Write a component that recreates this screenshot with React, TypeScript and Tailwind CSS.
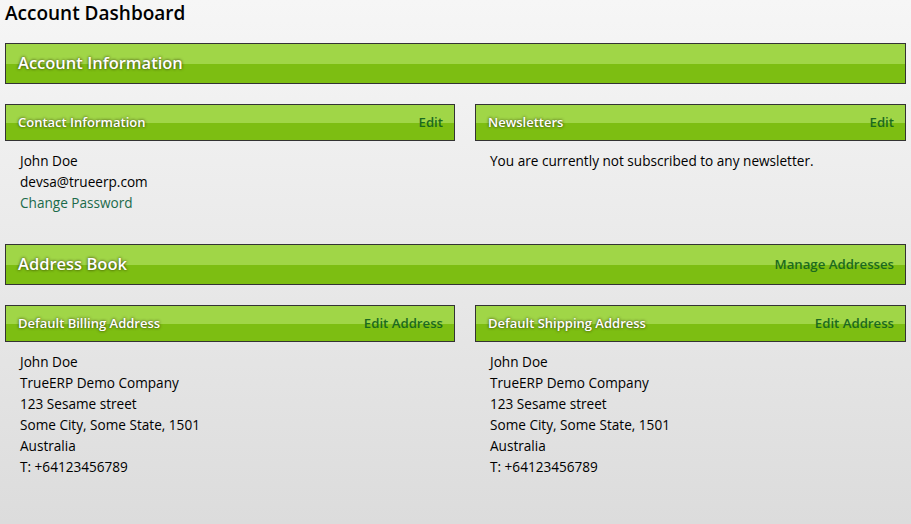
import React from 'react';

type BarProps = {
  title: string;
  action?: string;
  big?: boolean;
};

// green two-tone header bar
const Bar = ({ title, action, big = false }: BarProps) => (
  <div
    className={`flex items-center justify-between border border-[#333] bg-[linear-gradient(to_bottom,#a0d647_0%,#a0d647_52%,#7dbe12_52%,#7dbe12_100%)] pl-3 pr-[11px] leading-none ${
      big ? 'h-[41px]' : 'h-[37px]'
    }`}
  >
    <span
      className={`text-white [text-shadow:0_0_3px_rgba(40,40,0,1)] ${
        big ? 'text-[16.5px] font-semibold' : 'text-[13px] font-semibold'
      }`}
    >
      {title}
    </span>
    {action && (
      <a href="#" className={`text-[13.2px] font-semibold text-[#1b6a1f] ${big ? '' : 'pt-[1px]'}`}>
        {action}
      </a>
    )}
  </div>
);

const Lines = ({ lines }: { lines: string[] }) => (
  <div className="px-[15px] pt-[9px] text-[13.6px] leading-[21px] text-black">
    {lines.map((l) => (
      <div key={l}>{l}</div>
    ))}
  </div>
);

const address = [
  'John Doe',
  'TrueERP Demo Company',
  '123 Sesame street',
  'Some City, Some State, 1501',
  'Australia',
  'T: +64123456789',
];

export default function App() {
  return (
    <div className="min-h-[524px] bg-[linear-gradient(to_bottom,#f6f6f6,#dcdcdc)] px-[5px] pb-6 font-['Open_Sans','Noto_Sans',sans-serif]">
      <h1 className="text-[19px] font-semibold leading-[26px] text-black">Account Dashboard</h1>

      <div className="mt-[17px]">
        <Bar title="Account Information" big />
      </div>

      <div className="mt-5 grid grid-cols-[450px_1fr] gap-5">
        <div>
          <Bar title="Contact Information" action="Edit" />
          <div className="px-[15px] pt-[9px] text-[13.6px] leading-[21px] text-black">
            <div>John Doe</div>
            <div>devsa@trueerp.com</div>
            <a href="#" className="text-[#1b6a4a]">Change Password</a>
          </div>
        </div>
        <div>
          <Bar title="Newsletters" action="Edit" />
          <Lines lines={['You are currently not subscribed to any newsletter.']} />
        </div>
      </div>

      <div className="mt-[31px]">
        <Bar title="Address Book" action="Manage Addresses" big />
      </div>

      <div className="mt-5 grid grid-cols-[450px_1fr] gap-5">
        <div>
          <Bar title="Default Billing Address" action="Edit Address" />
          <Lines lines={address} />
        </div>
        <div>
          <Bar title="Default Shipping Address" action="Edit Address" />
          <Lines lines={address} />
        </div>
      </div>
    </div>
  );
}
